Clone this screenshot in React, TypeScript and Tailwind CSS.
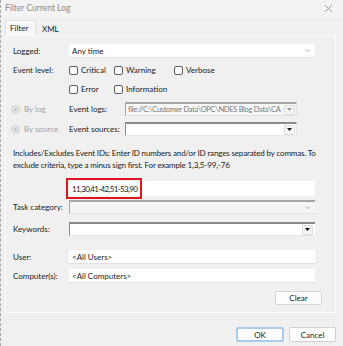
const Check = ({ label, w }: { label: string; w: string }) => (
  <div className={`flex items-center gap-[3px] ${w}`}>
    <span className="w-[9px] h-[9px] rounded-[2px] border border-[#5f5f5f] bg-[#fbfbfb]" />
    <span>{label}</span>
  </div>
);

const Radio = ({ label }: { label: string }) => (
  <div className="flex items-center gap-[4px] w-[58px] text-[#a0a0a0]">
    <span className="w-[9px] h-[9px] rounded-full border border-[#cfcfcf] bg-[#e6e6e6] flex items-center justify-center">
      <span className="w-[3px] h-[3px] rounded-full bg-[#c4c4c4]" />
    </span>
    <span>{label}</span>
  </div>
);

const DropBtn = ({ dim }: { dim?: boolean }) => (
  <span className="shrink-0 w-[11px] h-[10px] mr-[1px] bg-[#f4f4f4] border border-[#dcdcdc] rounded-[1px] flex items-center justify-center">
    <svg width="5" height="3" viewBox="0 0 5 3">
      <path d="M0 0h5L2.5 3z" fill={dim ? '#9a9a9a' : '#111'} />
    </svg>
  </span>
);

const Chevron = () => (
  <svg width="5" height="3" viewBox="0 0 5 3" className="mr-[5px]">
    <path d="M0.5 0.5 2.5 2.5 4.5 0.5" stroke="#9c9c9c" strokeWidth="0.8" fill="none" />
  </svg>
);

export default function App() {
  return (
    <div className="w-[343px] h-[346px] bg-[#f0f0f0] border-l border-dashed border-[#a8a8a8] font-['Lato','Noto_Sans',sans-serif] text-[8px] leading-none text-[#1a1a1a] overflow-hidden">
      <div className="h-[17px] flex items-center justify-between pl-[4px] pr-[11px] bg-[#f3f3f3]">
        <span className="text-[#8c8c8c] text-[8.5px]">Filter Current Log</span>
        <svg width="7" height="7" viewBox="0 0 7 7">
          <path d="M0 0 7 7M7 0 0 7" stroke="#8a8a8a" strokeWidth="0.8" />
        </svg>
      </div>
      <div className="flex h-[15px] mt-[3px] pl-[4px]">
        <div className="w-[31px] bg-[#f8f8f8] border border-b-0 border-[#e2e2e2] flex items-center pl-[4px]">Filter</div>
        <div className="pl-[6px] flex items-center pt-[2px]">XML</div>
      </div>
      <div className="relative ml-[4px] w-[331px] h-[278px] border border-[#fbfbfb] bg-[#f0f0f0] pl-[7px] pr-[13px] pt-[8px]">
        <div className="flex items-center h-[14px]">
          <span className="w-[56px]">Logged:</span>
          <div className="w-[246px] h-[14px] bg-white border-b border-[#e4e4e4] flex items-center justify-between pl-[3px]">
            <span>Any time</span>
            <Chevron />
          </div>
        </div>
        <div className="flex items-center h-[14px] mt-[5px]">
          <span className="w-[56px]">Event level:</span>
          <Check label="Critical" w="w-[45px]" />
          <Check label="Warning" w="w-[60px]" />
          <Check label="Verbose" w="w-[60px]" />
        </div>
        <div className="flex items-center h-[14px] mt-[5px]">
          <span className="w-[56px]" />
          <Check label="Error" w="w-[45px]" />
          <Check label="Information" w="w-[70px]" />
        </div>
        <div className="flex items-center h-[14px] mt-[6px] -ml-[2px]">
          <Radio label="By log" />
          <span className="w-[56px]">Event logs:</span>
          <div className="w-[172px] h-[14px] bg-[#f7f7f7] border-t-2 border-l border-[#a6a6a6] border-r border-r-[#e0e0e0] border-b border-b-[#e0e0e0] flex items-center justify-between pl-[2px] overflow-hidden">
            <span className="text-[#7a7a7a] whitespace-nowrap text-[7.5px] tracking-[-0.3px]">file://C:\Customer Data\OPC\NDES Blog Data\CA</span>
            <DropBtn dim />
          </div>
        </div>
        <div className="flex items-center h-[14px] mt-[6px] -ml-[2px]">
          <Radio label="By source" />
          <span className="w-[56px]">Event sources:</span>
          <div className="w-[172px] h-[14px] bg-white border-t-2 border-l border-[#8a8a8a] border-r border-r-[#e8e8e8] border-b border-b-[#e8e8e8] flex items-center justify-end">
            <DropBtn />
          </div>
        </div>
        <p className="mt-[11px] leading-[12px] whitespace-nowrap tracking-[-0.15px]">
          Includes/Excludes Event IDs: Enter ID numbers and/or ID ranges separated by commas. To
          <br />
          exclude criteria, type a minus sign first. For example 1,3,5-99,-76
        </p>
        <div className="flex items-center h-[15px] mt-[10px]">
          <span className="w-[56px]" />
          <div className="relative w-[246px] h-[15px] bg-white flex items-center pl-[3px]">
            <span className="tracking-[-0.65px]">11,30,41-42,51-53,90</span>
            <span className="absolute -left-[3px] -top-[3px] w-[76px] h-[21px] border-2 border-[#e0141e]" />
          </div>
        </div>
        <div className="flex items-center h-[14px] mt-[4px]">
          <span className="w-[56px]">Task category:</span>
          <div className="w-[246px] h-[14px] bg-[#f4f4f4] border-t-2 border-l border-[#a6a6a6] border-b border-b-[#e2e2e2] flex items-center justify-end">
            <Chevron />
          </div>
        </div>
        <div className="flex items-center h-[14px] mt-[8px]">
          <span className="w-[56px]">Keywords:</span>
          <div className="w-[246px] h-[14px] bg-white border-t-2 border-l border-[#8a8a8a] border-b border-b-[#e6e6e6] flex items-center justify-end pr-[1px]">
            <DropBtn />
          </div>
        </div>
        <div className="flex items-center h-[14px] mt-[14px]">
          <span className="w-[56px]">User:</span>
          <div className="w-[246px] h-[14px] bg-white border-b border-[#e0e0e0] flex items-center pl-[3px]">&lt;All Users&gt;</div>
        </div>
        <div className="flex items-center h-[14px] mt-[5px]">
          <span className="w-[56px]">Computer(s):</span>
          <div className="w-[246px] h-[14px] bg-white border-b border-[#e0e0e0] flex items-center pl-[3px]">&lt;All Computers&gt;</div>
        </div>
        <div className="flex justify-end mt-[8px]">
          <button className="w-[47px] h-[14px] bg-[#fdfdfd] border border-[#d4d4d4] rounded-[2px] flex items-center justify-center">Clear</button>
        </div>
      </div>
      <div className="flex justify-end gap-[5px] pr-[7px] mt-[14px]">
        <button className="w-[48px] h-[15px] bg-[#fdfdfd] border-2 border-[#a9ccee] rounded-[2px] flex items-center justify-center">OK</button>
        <button className="w-[47px] h-[15px] bg-[#fdfdfd] border border-[#d0d0d0] rounded-[2px] flex items-center justify-center">Cancel</button>
      </div>
    </div>
  );
}
